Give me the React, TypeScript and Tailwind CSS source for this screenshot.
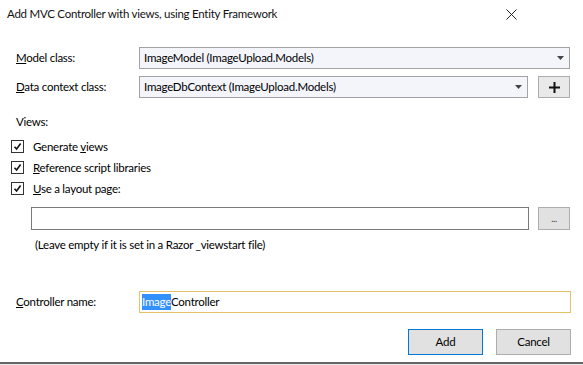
import React from "react";

const FONT = "font-['Lato','Liberation_Sans',Arial,sans-serif]";

function Caret() {
  return (
    <svg width="7" height="4" viewBox="0 0 7 4" className="shrink-0">
      <path d="M0 0 L7 0 L3.5 4 Z" fill="#444" />
    </svg>
  );
}

function Combo({ text, className }: { text: string; className: string }) {
  return (
    <div
      className={`h-[22px] flex items-center justify-between border border-[#a3a3a3] bg-[#f4f5fb] pl-[4px] pr-[5px] ${className}`}
    >
      <span>{text}</span>
      <Caret />
    </div>
  );
}

function Check({ children }: { children: React.ReactNode }) {
  return (
    <div className="h-[21px] flex items-center pl-[11px]">
      <div className="w-[13px] h-[13px] border border-[#333] bg-white flex items-center justify-center">
        <svg width="9" height="9" viewBox="0 0 9 9">
          <path d="M1.5 4.8 L3.6 7 L7.6 1.6" stroke="#111" strokeWidth="1.6" fill="none" />
        </svg>
      </div>
      <span className="ml-[9px]">{children}</span>
    </div>
  );
}

export default function App() {
  return (
    <div
      className={`w-[583px] h-[365px] bg-white relative overflow-hidden text-[11.5px] tracking-[-0.25px] text-black ${FONT}`}
    >
      {/* title bar */}
      <div className="h-[28px] flex items-center justify-between pl-[7px] pr-[66px]">
        <span className="text-[#111]">Add MVC Controller with views, using Entity Framework</span>
        <svg width="11" height="11" viewBox="0 0 11 11">
          <path d="M0.5 0.5 L10.5 10.5 M10.5 0.5 L0.5 10.5" stroke="#222" strokeWidth="1" />
        </svg>
      </div>

      <div className="pl-[16px] pr-[13px]">
        <div className="mt-[19px] flex items-center">
          <span className="w-[123px]">
            <u>M</u>odel class:
          </span>
          <Combo text="ImageModel (ImageUpload.Models)" className="flex-1" />
        </div>

        <div className="mt-[7px] flex items-center">
          <span className="w-[123px]">
            <u>D</u>ata context class:
          </span>
          <Combo text="ImageDbContext (ImageUpload.Models)" className="w-[389px]" />
          <button className="ml-[10px] w-[32px] h-[22px] border border-[#adadad] bg-[#e9e9e9] flex items-center justify-center">
            <svg width="11" height="11" viewBox="0 0 11 11">
              <path d="M5.5 0 V11 M0 5.5 H11" stroke="#111" strokeWidth="2" />
            </svg>
          </button>
        </div>
      </div>

      <div className="mt-[16px] pl-[16px] h-[16px] leading-[16px]">Views:</div>

      <div className="mt-[6px]">
        <Check>
          Generate <u>v</u>iews
        </Check>
        <Check>
          <u>R</u>eference script libraries
        </Check>
        <Check>
          <u>U</u>se a layout page:
        </Check>
      </div>

      <div className="mt-[8px] flex items-center pl-[31px] pr-[13px]">
        <div className="w-[499px] h-[23px] border border-[#7a7a7a] bg-white" />
        <button className="ml-[9px] w-[32px] h-[23px] border border-[#adadad] bg-[#e1e1e1] flex items-end justify-center pb-[6px] text-[9px] leading-none text-[#333]">
          ...
        </button>
      </div>

      <div className="mt-[8px] pl-[35px] h-[14px] leading-[14px]">
        (Leave empty if it is set in a Razor _viewstart file)
      </div>

      <div className="mt-[39px] flex items-center pl-[16px] pr-[12px]">
        <span className="w-[123px]">
          <u>C</u>ontroller name:
        </span>
        <div className="flex-1 h-[22px] border border-[#e3c26a] bg-white flex items-center pl-[2px]">
          <span className="bg-[#3390ff] text-white leading-[16px]">Image</span>
          <span>Controller</span>
        </div>
      </div>

      <div className="mt-[16px] flex justify-end gap-[13px] pr-[12px]">
        <button className="w-[75px] h-[26px] border border-[#0078d7] bg-[#e1e1e1]">Add</button>
        <button className="w-[75px] h-[26px] border border-[#adadad] bg-[#e1e1e1]">Cancel</button>
      </div>

      <div className="absolute left-0 right-0 bottom-0 h-[3px] bg-[#e8e8e8] border-t-2 border-[#666]" />
    </div>
  );
}
